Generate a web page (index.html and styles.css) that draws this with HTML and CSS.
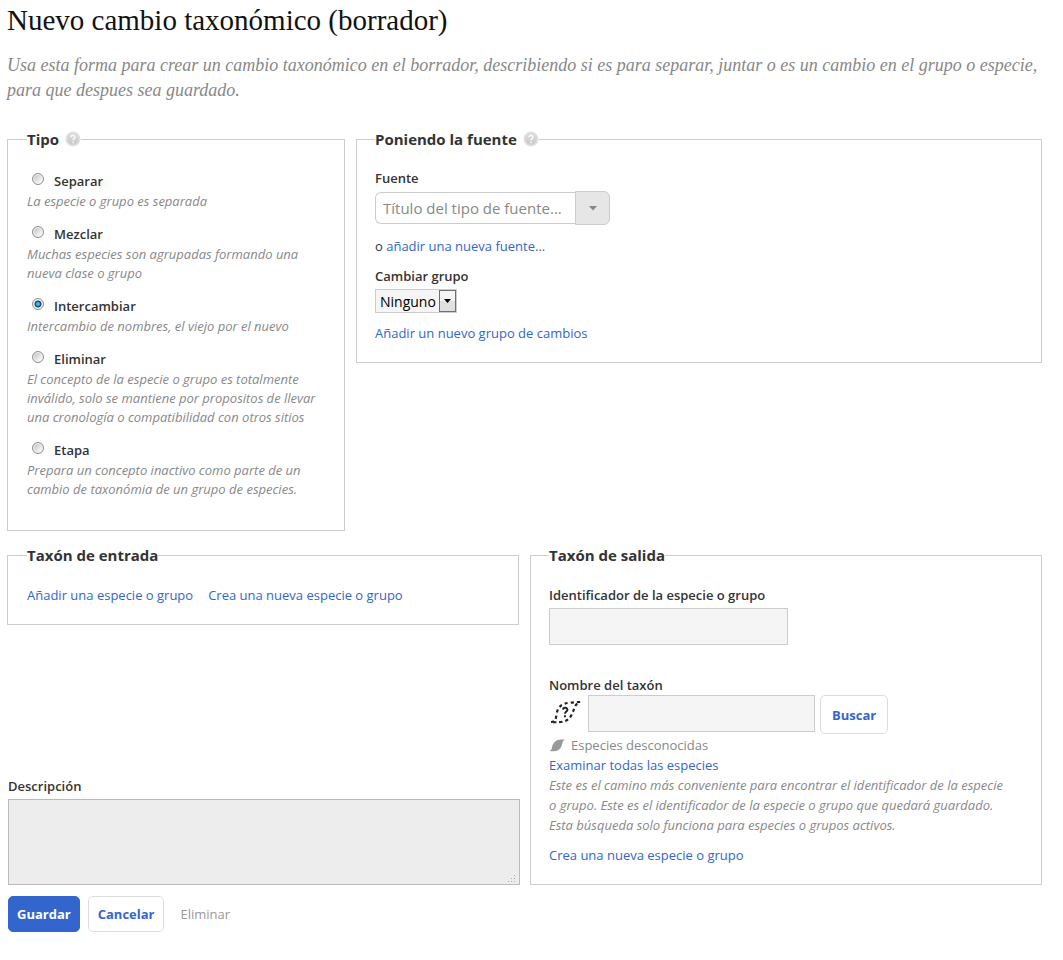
FILE: index.html
```html
<!DOCTYPE html>
<html lang="es">
<head>
<meta charset="utf-8">
<meta name="viewport" content="width=device-width, initial-scale=1">
<title>Nuevo cambio taxonómico (borrador)</title>
<link rel="stylesheet" href="styles.css">
</head>
<body>
<main class="page">
  <h1 class="title">Nuevo cambio taxonómico (borrador)</h1>
  <p class="intro">Usa esta forma para crear un cambio taxonómico en el borrador, describiendo si es para separar, juntar o es un cambio en el grupo o especie, para que despues sea guardado.</p>
  <form class="form">
    <div class="row row-top">
      <fieldset class="box box-type">
        <legend class="legend">Tipo
          <svg class="help" viewBox="0 0 16 16" aria-hidden="true"><defs><linearGradient id="g" x1="0" y1="0" x2="0" y2="1"><stop offset="0" stop-color="#dcdcdc"/><stop offset="1" stop-color="#c8c8c8"/></linearGradient></defs><circle cx="8" cy="8" r="7.5" fill="#e0e0e0"/><circle cx="8" cy="8" r="5.8" fill="url(#g)"/><path d="M5.9 6.3C6 3.7 10.200 3.800 10 6.300C9.900 7.700 8 7.700 8 9.500M8 10.800V12.300" fill="none" stroke="#fafafa" stroke-width="1.500"/></svg>
        </legend>
        <div class="option">
          <label class="option-label"><input class="radio" type="radio" name="type" aria-describedby="d1">Separar</label>
          <p class="hint" id="d1">La especie o grupo es separada</p>
        </div>
        <div class="option">
          <label class="option-label"><input class="radio" type="radio" name="type" aria-describedby="d2">Mezclar</label>
          <p class="hint" id="d2">Muchas especies son agrupadas formando una nueva clase o grupo</p>
        </div>
        <div class="option">
          <label class="option-label"><input class="radio" type="radio" name="type" aria-describedby="d3" checked>Intercambiar</label>
          <p class="hint" id="d3">Intercambio de nombres, el viejo por el nuevo</p>
        </div>
        <div class="option">
          <label class="option-label"><input class="radio" type="radio" name="type" aria-describedby="d4">Eliminar</label>
          <p class="hint" id="d4">El concepto de la especie o grupo es totalmente inválido, solo se mantiene por propositos de llevar una cronología o compatibilidad con otros sitios</p>
        </div>
        <div class="option">
          <label class="option-label"><input class="radio" type="radio" name="type" aria-describedby="d5">Etapa</label>
          <p class="hint" id="d5">Prepara un concepto inactivo como parte de un cambio de taxonómia de un grupo de especies.</p>
        </div>
      </fieldset>
      <fieldset class="box">
        <legend class="legend">Poniendo la fuente
          <svg class="help" viewBox="0 0 16 16" aria-hidden="true"><circle cx="8" cy="8" r="7.5" fill="#e0e0e0"/><circle cx="8" cy="8" r="5.8" fill="url(#g)"/><path d="M5.9 6.3C6 3.7 10.200 3.800 10 6.300C9.900 7.700 8 7.700 8 9.500M8 10.800V12.300" fill="none" stroke="#fafafa" stroke-width="1.500"/></svg>
        </legend>
        <label class="label" for="source">Fuente</label>
        <div class="combo">
          <input class="combo-input" id="source" type="text" placeholder="Título del tipo de fuente...">
          <button class="combo-button" type="button" aria-label="Mostrar fuentes"><svg class="caret" viewBox="0 0 8 5" aria-hidden="true"><path d="M0 0H8L4 4.500Z" fill="#888"/></svg></button>
        </div>
        <p class="line line-source">o <a class="link" href="#">añadir una nueva fuente...</a></p>
        <label class="label" for="group">Cambiar grupo</label>
        <div class="select-wrap">
          <select class="select" id="group"><option>Ninguno</option></select>
        </div>
        <p class="line line-last"><a class="link" href="#">Añadir un nuevo grupo de cambios</a></p>
      </fieldset>
    </div>
    <div class="row row-taxa">
      <div class="column">
        <fieldset class="box box-input">
          <legend class="legend">Taxón de entrada</legend>
          <div class="links"><a class="link" href="#">Añadir una especie o grupo</a><a class="link" href="#">Crea una nueva especie o grupo</a></div>
        </fieldset>
        <div class="description">
          <label class="label" for="description">Descripción</label>
          <textarea class="textarea" id="description"></textarea>
        </div>
      </div>
      <fieldset class="box box-output">
        <legend class="legend">Taxón de salida</legend>
        <label class="label" for="taxon-id">Identificador de la especie o grupo</label>
        <input class="input input-id" id="taxon-id" type="text">
        <label class="label label-name" for="taxon-name">Nombre del taxón</label>
        <div class="search">
          <svg class="unknown" viewBox="0 0 34 26" aria-hidden="true"><path d="M2 23C9 23 6 15 9.500 9.500C12.500 4.500 17 3.500 31 3C25 5 25.500 11 22.500 16C19.500 22 15 24 2 23Z" fill="none" stroke="#222" stroke-width="2.200" stroke-dasharray="3.200 3"/><path d="M14 10.700C14.300 8 18.700 8.300 18.400 10.900C18.200 12.600 16 12.600 16 14.800M16 16.300V18.300" fill="none" stroke="#222" stroke-width="2"/></svg>
          <input class="input input-name" id="taxon-name" type="text">
          <button class="button button-search" type="button">Buscar</button>
        </div>
        <p class="status"><svg class="leaf" viewBox="0 0 17 13" aria-hidden="true"><path d="M0 12C4 11.500 2 8 4.500 4.500C7 0.500 10 0.500 16 0.500C12.500 2 14 5.500 11.500 9C9 12.500 6 12.500 0 12Z" fill="#999"/></svg>Especies desconocidas</p>
        <a class="link link-block" href="#">Examinar todas las especies</a>
        <p class="hint hint-search">Este es el camino más conveniente para encontrar el identificador de la especie o grupo. Este es el identificador de la especie o grupo que quedará guardado. Esta búsqueda solo funciona para especies o grupos activos.</p>
        <p class="line line-last"><a class="link" href="#">Crea una nueva especie o grupo</a></p>
      </fieldset>
    </div>
    <div class="actions">
      <button class="button button-primary" type="submit">Guardar</button>
      <button class="button button-cancel" type="button">Cancelar</button>
      <button class="button-plain" type="button" disabled>Eliminar</button>
    </div>
  </form>
</main>
</body>
</html>
```
FILE: styles.css
```css
* { box-sizing: border-box; }
body {
  margin: 0;
  background: #fff;
  color: #333;
  font: 13px/20px "Open Sans", "Trebuchet MS", sans-serif;
}
p, h1, fieldset { margin: 0; }
input, select, textarea, button { font-family: inherit; margin: 0; }
.page { padding: 6px 21px 28px 7px; }
.title {
  color: #111;
  font: 400 29px/28px Georgia, "Liberation Serif", serif;
}
.intro {
  margin-top: 19px;
  color: #888;
  font: italic 18px/25px Georgia, "Liberation Serif", serif;
}
.form { margin-top: 26px; }
.row { display: grid; column-gap: 11px; }
.row-top { grid-template-columns: 338fr 686fr; align-items: start; }
.row-taxa { grid-template-columns: 1fr 1fr; margin-top: 14px; }
.box {
  min-width: 0;
  padding: 19px 18px;
  border: 1px solid #ccc;
}
.box-type { padding: 22px 12px 31px 19px; }
.box-input { padding: 20px 19px 19px; }
.box-output { padding-top: 20px; }
.legend {
  display: flex;
  align-items: center;
  gap: 6px;
  padding: 0;
  font-size: 15px;
  font-weight: 700;
  line-height: 20px;
}
.help { width: 16px; height: 16px; }
.option + .option { margin-top: 13px; }
.option-label { display: flex; align-items: center; font-weight: 600; }
.radio {
  appearance: none;
  width: 12px;
  height: 12px;
  margin: 0 10px 4px 5px;
  border: 1px solid #8e8f8f;
  border-radius: 50%;
  background: linear-gradient(135deg, #bbb, #f4f4f4 75%);
  box-shadow: inset 0 0 0 1px #f4f4f4;
}
.radio:checked { background: radial-gradient(circle, #4fc3ee 0 1px, #0b4069 3px 3px, #eee 4px); }
.hint { margin-top: 1px; color: #888; font-style: italic; line-height: 19px; }
.hint-search { margin-top: 0; padding-right: 14px; line-height: 20px; }
.label { display: block; font-weight: 600; }
.link { color: #36c; text-decoration: none; }
.link-block { display: block; }
.combo { display: flex; align-items: center; margin-top: 3px; }
.combo-input {
  width: 200px;
  height: 32px;
  padding: 0 7px;
  border: 1px solid #ccc;
  border-right: 0;
  border-radius: 6px 0 0 6px;
  color: #333;
  font-size: 15px;
}
.combo-input::placeholder { color: #888; }
.combo-button {
  display: grid;
  place-items: center;
  width: 35px;
  height: 34px;
  padding: 0;
  border: 1px solid #ccc;
  border-radius: 0 6px 6px 0;
  background: #e6e6e6;
}
.caret { width: 8px; height: 5px; }
.line { margin: 10px 0; }
.line-source { margin-top: 11px; }
.line-last { margin-bottom: 0; }
.select-wrap { display: flex; margin-top: 3px; }
.select {
  appearance: none;
  height: 24px;
  padding: 0 20px 0 4px;
  border: 1px solid #ccc;
  border-radius: 0;
  background: #f5f5f5 url("data:image/svg+xml,%3Csvg xmlns='http://www.w3.org/2000/svg' width='17' height='22'%3E%3Crect x='.5' y='.5' width='16' height='21' fill='%23e0e0e0' stroke='%23707070'/%3E%3Crect x='1' y='1' width='15' height='10' fill='%23f4f4f4'/%3E%3Cpath d='M5 9h7l-3.500 4z'/%3E%3C/svg%3E") right center no-repeat;
  color: #000;
  font-size: 14px;
}
.column { display: flex; flex-direction: column; justify-content: space-between; }
.description { margin: 0 -1px 0 1px; }
.links { display: flex; flex-wrap: wrap; gap: 0 15px; }
.textarea {
  display: block;
  width: 100%;
  height: 86px;
  margin-top: 3px;
  border: 1px solid #bbb;
  background: #ededed;
  resize: vertical;
}
.textarea::-webkit-resizer {
  background: url("data:image/svg+xml,%3Csvg xmlns='http://www.w3.org/2000/svg' width='12' height='12' fill='%23aaa'%3E%3Cpath d='M1 9h1v1h-1zM4 9h1v1h-1zM7 9h1v1h-1zM4 6h1v1h-1zM7 6h1v1h-1zM7 3h1v1h-1z'/%3E%3C/svg%3E") right bottom no-repeat;
}
.input {
  height: 37px;
  padding: 0 8px;
  border: 1px solid #ccc;
  background: #f5f5f5;
  font-size: 15px;
}
.input-id { display: block; width: 239px; max-width: 100%; margin-top: 3px; }
.label-name { margin-top: 30px; }
.search { display: flex; align-items: flex-start; margin-bottom: 1px; }
.unknown { flex: none; width: 34px; height: 26px; margin: 4px 5px 0 0; }
.input-name { flex: 0 1 227px; min-width: 0; margin-right: 5px; }
.button {
  height: 36px;
  padding: 0 9px;
  border: 1px solid #ddd;
  border-radius: 5px;
  background: #fff;
  color: #36c;
  font-size: 13px;
  font-weight: 700;
}
.button-search { height: 39px; padding: 0 11px; }
.status { display: flex; align-items: center; gap: 5px; color: #888; }
.leaf { width: 17px; height: 13px; }
.actions { display: flex; align-items: center; gap: 8px; margin: 11px 0 0 1px; }
.button-primary { padding: 0 8px; border-color: #36c; background: #36c; color: #fff; }
.button-plain {
  padding: 0 8px;
  border: 0;
  background: none;
  color: #999;
  font-size: 13px;
}
```
